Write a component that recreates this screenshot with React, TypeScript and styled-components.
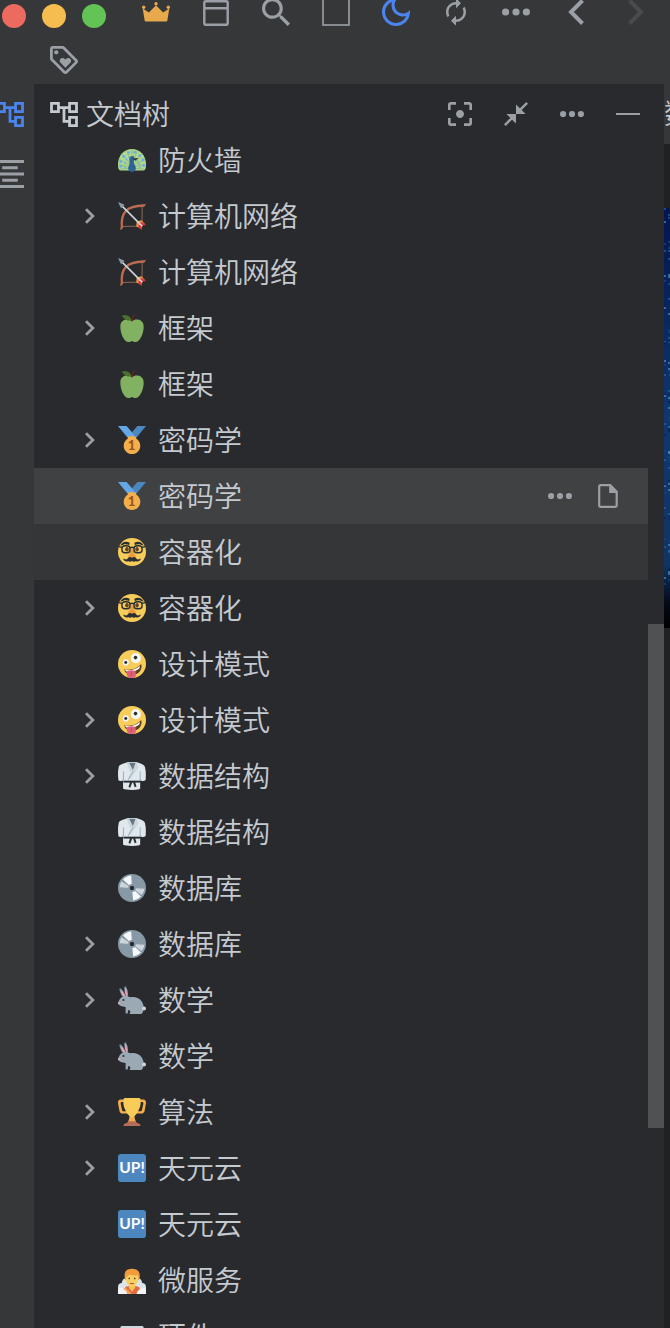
import React from "react";
import styled, { createGlobalStyle } from "styled-components";

const color = {
  bar: "#363738",
  panel: "#292a2d",
  editor: "#202122",
  text: "#c5cad1",
  icon: "#9aa0a6",
  faint: "#4a4b4c",
  accent: "#4c84ef",
  focusRow: "#353637",
  hoverRow: "#404142",
  thumb: "#505153",
};

const GlobalStyle = createGlobalStyle`
  * { box-sizing: border-box; }
  body {
    margin: 0;
    background: ${color.bar};
    color: ${color.text};
    font-family: "Noto Sans CJK SC", "Noto Sans", sans-serif;
    font-size: 28px;
    font-weight: 350;
  }
`;

const Shell = styled.div`
  display: flex;
  flex-direction: column;
  height: 100vh;
  overflow: hidden;
`;

const TitleBar = styled.header`
  display: flex;
  align-items: flex-end;
  height: 36px;
  flex: none;
`;

const WindowControls = styled.div`
  display: flex;
  gap: 16px;
  padding: 0 20px 8px 2px;
`;

const Light = styled.button<{ $fill: string }>`
  width: 24px;
  height: 24px;
  padding: 0;
  border: 0;
  border-radius: 50%;
  background: ${(p) => p.$fill};
`;

const IconButton = styled.button<{ $w: number; $h: number; $tone?: string }>`
  display: flex;
  align-items: center;
  justify-content: center;
  flex: none;
  width: ${(p) => p.$w}px;
  height: ${(p) => p.$h}px;
  padding: 0;
  border: 0;
  background: none;
  color: ${(p) => p.$tone ?? color.icon};
`;

const Glyph = styled.svg`
  display: block;
  flex: none;
  fill: currentColor;
`;

const PluginBar = styled.div`
  display: flex;
  flex: none;
  height: 48px;
  padding-left: 34px;
`;

const Workspace = styled.div`
  display: flex;
  flex: 1;
  min-height: 0;
`;

const Dock = styled.nav`
  display: flex;
  flex-direction: column;
  flex: none;
  width: 34px;
  overflow: hidden;
`;

const DockButton = styled(IconButton)`
  justify-content: flex-end;
  padding-right: 10px;
`;

const Panel = styled.section`
  display: flex;
  flex-direction: column;
  flex: 1;
  min-width: 0;
  background: ${color.panel};
`;

const PanelHeader = styled.div`
  display: flex;
  align-items: center;
  flex: none;
  height: 60px;
  padding: 0 8px 0 16px;
`;

const PanelTitle = styled.h1`
  flex: 1;
  margin: 0 0 0 8px;
  padding-bottom: 2px;
  font-size: 28px;
  font-weight: 350;
  line-height: 40px;
`;

const Scroller = styled.div`
  display: flex;
  flex: 1;
  min-height: 0;
`;

const Tree = styled.ul`
  flex: 1;
  min-width: 0;
  margin: -12px 0 0;
  padding: 0;
  overflow: hidden;
  list-style: none;
`;

const Row = styled.li<{ $state?: "hover" | "focus" }>`
  display: flex;
  align-items: center;
  height: 56px;
  padding: 0 16px 0 42px;
  background: ${(p) =>
    p.$state === "hover" ? color.hoverRow : p.$state === "focus" ? color.focusRow : "transparent"};
`;

const ToggleSlot = styled.div`
  display: flex;
  width: 28px;
  margin-right: 14px;
`;

const DocLink = styled.a`
  display: flex;
  align-items: center;
  flex: 1;
  gap: 12px;
  color: inherit;
  text-decoration: none;
  white-space: nowrap;
`;

const DocName = styled.span`
  padding-bottom: 2px;
  line-height: 40px;
`;

const Track = styled.div`
  flex: none;
  width: 16px;
`;

const Thumb = styled.div`
  height: 504px;
  margin-top: 480px;
  background: ${color.thumb};
`;

const Editor = styled.main`
  display: flex;
  flex-direction: column;
  flex: none;
  width: 6px;
  overflow: hidden;
  background: ${color.editor};
`;

const EditorTab = styled.div`
  flex: none;
  height: 60px;
  background: ${color.bar};
  line-height: 56px;
  white-space: nowrap;
`;

const Cover = styled.svg`
  display: block;
  flex: none;
  width: 100%;
  height: 420px;
  margin-top: 64px;
`;

/* ---------- interface icons ---------- */

type IconProps = { box: string; w: number; h: number; d?: string; children?: React.ReactNode };
const Icon = ({ box, w, h, d, children }: IconProps) => (
  <Glyph viewBox={box} width={w} height={h} aria-hidden="true">
    {d && <path d={d} />}
    {children}
  </Glyph>
);

const TreeIcon = () => (
  <Icon
    box="2 3 20 18"
    w={28}
    h={25}
    d="M22 11V3h-7v3H9V3H2v8h7V8h2v10h4v3h7v-8h-7v3h-2V8h2v3h7zM7 9H4V5h3v4zm10 6h3v4h-3v-4zm0-10h3v4h-3V5z"
  />
);
const OutlineIcon = () => (
  <Icon
    box="3 3 18 18"
    w={28}
    h={28}
    d="M7 15v2h10v-2H7zm-4 6h18v-2H3v2zm0-8h18v-2H3v2zm4-6v2h10V7H7zM3 3v2h18V3H3z"
  />
);
const Dots = ({ size }: { size: number }) => (
  <Icon box="0 0 28 8" w={size} h={8}>
    <circle cx="3.6" cy="4" r="3.6" />
    <circle cx="14" cy="4" r="3.6" />
    <circle cx="24.4" cy="4" r="3.6" />
  </Icon>
);
const Crown = () => (
  <Icon box="0 0 28 20" w={28} h={20}>
    <path d="M3.5 19.5h21c.5 0 .8-.3.8-.7l2-12.300-6.200 4L14 3.200l-7.100 7.300L.7 6.500l2 12.300c.1.4.4.7.8.7z" />
    <circle cx="1.700" cy="5.200" r="1.700" />
    <circle cx="14" cy="1.700" r="1.700" />
    <circle cx="26.300" cy="5.200" r="1.700" />
  </Icon>
);
const Calendar = () => (
  <Icon box="0 0 28 28" w={28} h={28}>
    <rect x="2.300" y="3.200" width="23.400" height="23.500" rx="1.500" fill="none" stroke="currentColor" strokeWidth="2.400" />
    <path d="M2 9h24v2.400H2zM6 0h3v4H6zM19 0h3v4h-3z" />
  </Icon>
);
const Search = () => (
  <Icon
    box="3 3 17.500 17.500"
    w={28}
    h={28}
    d="M15.500 14h-.79l-.28-.27C15.410 12.590 16 11.110 16 9.500 16 5.910 13.090 3 9.500 3S3 5.910 3 9.500 5.910 16 9.500 16c1.610 0 3.090-.59 4.230-1.570l.27.28v.79l5 4.990L20.490 19l-4.990-5zm-6 0C7.010 14 5 11.990 5 9.500S7.010 5 9.500 5 14 7.010 14 9.500 11.990 14 9.500 14z"
  />
);
const Square = () => (
  <Icon box="0 0 28 28" w={28} h={28}>
    <rect x="1" y="1" width="26" height="26" fill="none" stroke="currentColor" strokeWidth="1.600" />
  </Icon>
);
const Moon = () => (
  <Icon
    box="3 3 18 18"
    w={28}
    h={28}
    d="M9.370 5.510C9.190 6.150 9.100 6.820 9.100 7.500c0 4.080 3.320 7.400 7.400 7.400.68 0 1.350-.09 1.990-.27C17.450 17.190 14.930 19 12 19c-3.860 0-7-3.140-7-7 0-2.930 1.810-5.450 4.370-6.490zM12 3c-4.970 0-9 4.030-9 9s4.030 9 9 9 9-4.030 9-9c0-.46-.04-.92-.1-1.360-.98 1.370-2.580 2.260-4.400 2.260-2.980 0-5.400-2.420-5.400-5.400 0-1.810.89-3.420 2.260-4.400C12.920 3.040 12.460 3 12 3z"
  />
);
const Refresh = () => (
  <Icon
    box="0 0 24 24"
    w={30}
    h={30}
    d="M12 6v3l4-4-4-4v3c-4.420 0-8 3.580-8 8 0 1.570.46 3.030 1.240 4.260L6.700 14.800c-.45-.83-.7-1.790-.7-2.800 0-3.310 2.690-6 6-6zm6.760 1.740L17.300 9.200c.44.84.7 1.790.7 2.800 0 3.310-2.690 6-6 6v-3l-4 4 4 4v-3c4.420 0 8-3.580 8-8 0-1.570-.46-3.030-1.240-4.260z"
  />
);
const Arrow = ({ flip }: { flip?: boolean }) => (
  <Icon box="0 0 16 26" w={16} h={26}>
    <path
      d={flip ? "M1.500 1.500L13 13 1.500 24.500" : "M14.500 1.500L3 13l11.500 11.500"}
      fill="none"
      stroke="currentColor"
      strokeWidth="4"
    />
  </Icon>
);
const TagHeart = () => (
  <Icon box="2 2 20 20" w={28} h={28}>
    <path d="M21.410 11.580l-9-9C12.050 2.220 11.550 2 11 2H4c-1.100 0-2 .9-2 2v7c0 .55.22 1.050.59 1.420l9 9c.36.36.86.58 1.410.58s1.050-.22 1.410-.59l7-7c.37-.36.59-.86.59-1.410s-.23-1.060-.59-1.420zM13 20.010L4 11V4h7v-.01l9 9-7 7.020z" />
    <circle cx="6.500" cy="6.500" r="1.500" />
    <path d="M8.900 12.550c0 .57.23 1.070.6 1.450l3.500 3.500 3.500-3.500c.37-.37.6-.89.6-1.450 0-1.130-.92-2.050-2.050-2.050-.57 0-1.080.23-1.450.6l-.6.600-.6-.590c-.37-.38-.89-.61-1.450-.61-1.130 0-2.050.92-2.050 2.050z" />
  </Icon>
);
const Focus = () => (
  <Icon
    box="3 3 18 18"
    w={24}
    h={24}
    d="M12 9c-1.660 0-3 1.340-3 3s1.340 3 3 3 3-1.340 3-3-1.340-3-3-3zm-7 6H3v4c0 1.100.9 2 2 2h4v-2H5v-4zM5 5h4V3H5c-1.100 0-2 .9-2 2v4h2V5zm14-2h-4v2h4v4h2V5c0-1.100-.9-2-2-2zm0 16h-4v2h4c1.100 0 2-.9 2-2v-4h-2v4z"
  />
);
const Collapse = () => (
  <Icon
    box="2 2 20 20"
    w={24}
    h={24}
    d="M22 3.410L16.710 8.700 20 12h-8V4l3.290 3.290L20.590 2 22 3.410zM3.410 22l5.290-5.290L12 20v-8H4l3.290 3.290L2 20.590 3.410 22z"
  />
);
const Minus = () => <Icon box="0 0 24 2" w={24} h={2} d="M0 0h24v2H0z" />;
const FileIcon = () => (
  <Icon box="0 0 20 24" w={20} h={24}>
    <path d="M2.500 1.200h9.800L18.700 7.600v13.900c0 .8-.5 1.300-1.300 1.300H2.500c-.8 0-1.300-.5-1.300-1.300v-19c0-.8.5-1.300 1.300-1.300z" fill="none" stroke="currentColor" strokeWidth="2.200" />
    <path d="M11.200 1l8 8h-8z" />
  </Icon>
);
const Chevron = () => (
  <Icon box="0 0 12 16" w={12} h={16}>
    <path d="M2 1.200L8.900 8 2 14.800" fill="none" stroke="currentColor" strokeWidth="2.700" />
  </Icon>
);

/* ---------- document emoji ---------- */

const outerSpots = [
  [3.500, 26], [3.500, 20], [7.500, 13.500], [14, 8.500], [21.500, 8], [28, 12.500], [32, 18], [33, 25],
];
const innerSpots = [
  [9, 27.500], [9, 22], [11, 17.500], [14.500, 14], [25, 19.500], [27, 23], [28, 27.500],
];

const emoji = {
  peacock: (
    <>
      <path d="M18 4C8 4 0 12.500 0 23.500c0 6 1 8 4 8h28c3 0 4-2 4-8C36 12.500 28 4 18 4z" fill="#b2d88f" />
      <path d="M18 26L1 17M18 26L5 10M18 26L11 5M18 26L18 4M18 26L25 5M18 26L31 10M18 26L35 17M18 27L1 24M18 27L35 24M18 28L2 30M18 28L34 30" stroke="#84b368" strokeWidth="0.900" fill="none" />
      {outerSpots.map(([x, y]) => (
        <circle key={`${x}-${y}`} cx={x} cy={y} r="1.900" fill="#67b1e8" />
      ))}
      {innerSpots.map(([x, y]) => (
        <circle key={`${x}-${y}`} cx={x} cy={y} r="1.300" fill="#67b1e8" />
      ))}
      <path d="M20.500 13.500c-2.500-1.500-6 0-6 4 0 3 1 4.500 0 7-1.500 2.500-2 5-.5 7 1.800 2.300 6.200 2.300 8 0 1.500-2 1-4.800-.5-7-1-1.600-2-3.500-.5-7z" fill="#2c6399" />
      <path d="M19 16l7-.5-3.500 3.500z" fill="#292f33" />
    </>
  ),
  bow: (
    <>
      <path d="M5 31.500L31 31 31 5" fill="none" stroke="#8c6a5a" strokeWidth="1.300" />
      <path d="M5 33C3.500 14 10 5 33 4.500" fill="none" stroke="#bd6c50" strokeWidth="3" strokeLinecap="round" />
      <path d="M3.200 35.500l2-4M31.500 5l4-2" fill="none" stroke="#bd6c50" strokeWidth="1.800" />
      <path d="M24 25l6-1.500 5 5-3.500 1-1 5-7-3z" fill="#f49c38" />
      <path d="M25 27l6-1 5 3.500-5 .7zM26 29l4 1 1 6-4.500-2.500z" fill="#dd3342" />
      <path d="M4 4l27 27" stroke="#ccd6dd" strokeWidth="2.100" />
      <path d="M0 0l8.500 3.500L6 6 4 8.500z" fill="#8899a6" />
    </>
  ),
  apple: (
    <>
      <path d="M24 7c-3 0-3 1-6 1s-3-1-6-1c-4 0-9 2-9 9 0 11 6 20 10 20 3 0 3-1 5-1s2 1 5 1c4 0 10-9 10-20 0-7-5-9-9-9z" fill="#83b162" />
      <path d="M17.500 8.500C15 9 8 8.500 5 2c6-1.500 11 0 12.500 6.500z" fill="#47712d" />
      <path d="M18.300 9.500c-.8 0-1.300-.6-1.200-1.300C17.500 4.500 19 1.500 21 .4c.8-.4 1.700.6 1 1.300-1.500 1.700-2.300 4-2.500 6.700 0 .6-.5 1.100-1.200 1.100z" fill="#63261a" />
    </>
  ),
  medal: (
    <>
      <path d="M18 8l-7-8H0l14 17 11.521-4.750z" fill="#65a8e8" />
      <path d="M25 0l-7 8 5.390 7.312 1.227-1.489L36 0z" fill="#4c87bf" />
      <path d="M23.205 16.026c.08-.217.131-.448.131-.693 0-1.104-.896-2-2-2h-6.667c-1.104 0-2 .896-2 2 0 .245.05.476.131.693-3.258 1.826-5.464 5.307-5.464 9.307C7.336 31.224 12.111 36 18.002 36c5.892 0 10.667-4.776 10.667-10.667 0-4-2.206-7.481-5.464-9.307z" fill="#f4ae4b" />
      <text x="17.500" y="31" textAnchor="middle" fill="#95561f" fontFamily="Lato, sans-serif" fontWeight="900" fontSize="17">1</text>
    </>
  ),
  disguise: (
    <>
      <circle cx="18" cy="18" r="18" fill="#f8cc59" />
      <ellipse cx="11.500" cy="14.500" rx="2.300" ry="3" fill="#63462a" />
      <ellipse cx="24.500" cy="14.500" rx="2.300" ry="3" fill="#63462a" />
      <path d="M18 14c-2 0-2.500 6-4.500 8.500C12 25 14.500 26.500 18 26s6-1 4.500-3.500C20.500 20 20 14 18 14z" fill="#ee9b43" />
      <g fill="none" stroke="#292f33" strokeWidth="1.800">
        <rect x="5" y="10" width="10.500" height="9" rx="4" />
        <rect x="20.500" y="10" width="10.500" height="9" rx="4" />
        <path d="M15.500 13c1.500-1.200 3.500-1.200 5 0M5 12l-4-1M31 12l4-1" />
      </g>
      <path d="M3 10c2-5 7-6.500 12-4l-.5 3C10 7 7 8 3 10zM33 10c-2-5-7-6.500-12-4l.5 3C26 7 29 8 33 10z" fill="#292f33" />
      <path d="M18 25.500c-2.500-2-5-.5-6 1.500-1.500 1-3.500.5-5.500-.5 1 4 4.500 4 6.500 3.500 2 1 4 .7 5-.3 1 1 3 1.300 5 .3 2 .5 5.500.5 6.500-3.500-2 1-4 1.500-5.500.5-1-2-3.500-3.500-6-1.500z" fill="#292f33" />
    </>
  ),
  zany: (
    <>
      <circle cx="18" cy="18" r="18" fill="#f8cc59" />
      <circle cx="23" cy="10.500" r="6.500" fill="#f4f6f7" />
      <circle cx="10" cy="16" r="4" fill="#f4f6f7" />
      <circle cx="22.500" cy="9.800" r="2.300" fill="#292f33" />
      <circle cx="10" cy="16" r="1.900" fill="#292f33" />
      <path d="M8 25c8 1.500 16-.5 22-7 1.500 7-3 13-9.500 13.500C14 32 9 30 8 25z" fill="#5d3e20" />
      <path d="M9 25.500c7.500 1.300 14.500-.7 19-5 .3 1.500-.3 2.500-1 3.500-5 4-10.500 4.500-15.500 4-1.200-.5-2-1.200-2.500-2.500z" fill="#fff" />
      <path d="M11 28c4-2.500 8-2.500 11.500-1l.5 5c0 2-2 4-5.500 4s-6-1.500-6-4z" fill="#de6179" />
      <path d="M17 28l.5 5" stroke="#b74256" strokeWidth="1" />
    </>
  ),
  robe: (
    <>
      <path d="M13 0C8 2 2 3 1 6c-1.500 6-1 12-.5 17 1 1.500 4 1.700 6 .8V34c3 2.500 20 2.500 22 0V23.800c2 .9 5.500.7 7-.8.5-6 .5-12-1-17-1-3-6-4-11-6z" fill="#e1e8ed" />
      <path d="M12 1h12L19 12z" fill="#66757f" />
      <path d="M11 1l3-.7 5 9.700-3 4zM24.500 1l-2-.5-3 9-7 12 2 1L26 8z" fill="#ccd6dd" />
      <path d="M7 12v12M28.500 12v12M19.500 12l-6.500 11" stroke="#99aab5" strokeWidth="1.200" fill="none" />
      <path d="M7 24h22v2.500H7z" fill="#292f33" />
      <path d="M16 24l-2.500 8 2.300 1 3-8zM19 25l2.500 7.500 2.300-1L21.500 24z" fill="#292f33" />
    </>
  ),
  disc: (
    <>
      <circle cx="18" cy="18" r="18" fill="#8899a6" />
      <path d="M18 18L4.500 9.500A16 16 0 0 0 2 17z" fill="#ccd6dd" />
      <path d="M18 18L17 2A16 16 0 0 0 6.500 7z" fill="#f5f8fa" />
      <path d="M18 18l1.500 16A16 16 0 0 0 29.500 29z" fill="#f5f8fa" />
      <path d="M18 18l12.500 9A16 16 0 0 0 34 19z" fill="#ccd6dd" />
      <circle cx="18" cy="18" r="5" fill="#8899a6" />
      <circle cx="18" cy="18" r="2.800" fill="#292a2d" />
    </>
  ),
  rabbit: (
    <>
      <path d="M6 14C3 9 1 4.500 2.500 2.500c3 2 6.500 6.500 7.500 11.500zM11 15C9 10 7 2 9 0c3 2 5 10 3.500 15z" fill="#8799a7" />
      <path d="M3.500 5C3.500 8 6 12 8 14l1.500-.5C8.500 10 6 6.500 3.500 5zM9.500 2c-.8 4 0 9 1.300 12 1.500-3 .9-9-1.300-12z" fill="#e5a4b3" />
      <path d="M1 20c1-4 5-7 9-7 3 0 4 1.500 6 1.500 8-2 16 3 17 12 0 5-1 9.500-3.500 9.500H15l1-4-3-1-.5 4.500H9.800V27C5 26.500 0 26 1 20z" fill="#9ba9b5" />
      <circle cx="33.500" cy="29" r="2.500" fill="#ccd6dd" />
      <circle cx="7" cy="18" r="1.300" fill="#292f33" />
      <path d="M0 21c1-1.500 2.500-1 3 .5-.5 2-2 2.500-3 2z" fill="#e5a4b3" />
    </>
  ),
  trophy: (
    <>
      <path d="M5.123 5h6C12.227 5 13 4.896 13 6V4c0-1.104-.773-2-1.877-2h-8c-2 0-3.583 2.125-3 5 0 0 1.791 9.375 1.917 9.958C2.373 18.500 4.164 20 6.081 20h6.958c1.105 0-.039-1.896-.039-3v-2c0 1.104-.773 2-1.877 2h-4c-1.104 0-1.833-1.042-2-2S3.539 7.667 3.539 7.667C3.206 5.750 4.018 5 5.123 5zm25.812 0h-6C23.831 5 22 4.896 22 6V4c0-1.104 1.831-2 2.935-2h8c2 0 3.584 2.125 3 5 0 0-1.633 9.419-1.771 10-.354 1.500-2.042 3-4 3h-7.146C21.914 20 22 18.104 22 17v-2c0 1.104 1.831 2 2.935 2h4c1.104 0 1.834-1.042 2-2s1.584-7.333 1.584-7.333C32.851 5.750 32.040 5 30.935 5z" fill="#f4ae4b" />
      <path d="M15 20h6c0 6 1 9 3 12H12c2-3 3-6 3-12z" fill="#f4ae4b" />
      <path d="M29.123 6.577C29.123 13.352 22.353 25 18.008 25 13.663 25 6.893 13.352 6.893 6.577 6.893 1.500 7 0 9.500 0h17c2.600 0 2.623 1.500 2.623 6.577z" fill="#f8cc59" />
      <path d="M7 36c0-2.500 2-4 5-4l1.500-2h9l1.500 2c3 0 5 1.500 5 4z" fill="#b66f56" />
    </>
  ),
  up: (
    <>
      <rect width="36" height="36" rx="4" fill="#4c87bf" />
      <text x="18" y="25" textAnchor="middle" fill="#fff" fontFamily="Lato, sans-serif" fontWeight="700" fontSize="20">UP!</text>
    </>
  ),
  sauna: (
    <>
      <path d="M0 36V27c0-3 2-5 5-5 0-4 3-7 7-7h12c4 0 7 3 7 7 3 0 5 2 5 5v9z" fill="#dce3e8" />
      <path d="M5 36c0-6 4-9 9-10h8c5 1 9 4 9 10z" fill="#f4a25a" />
      <path d="M9 27l9 9h5l5-8c-2-1.500-4-2-6-2h-8c-2 0-3.500.4-5 1z" fill="#e06b43" />
      <path d="M14 23h8v5l-4 5-4-5z" fill="#f5c451" />
      <path d="M8.500 12C8.500 6 12 3.500 18 3.500S28 6 28 13c0 2-.5 4-1 5H9.500c-.6-1-1-3-1-6z" fill="#f19b3d" />
      <path d="M10 15c2-1 3.500-2 4.500-4 3 1.500 8 1.500 10.500.5.7 1 1 2 1 4 0 6-3.500 11-8 11s-8-5-8-11.500z" fill="#f8cf61" />
      <circle cx="14.500" cy="16" r="1.100" fill="#63462a" />
      <circle cx="21.500" cy="16" r="1.100" fill="#63462a" />
      <path d="M15 22h6c-1 2-5 2-6 0z" fill="#b54a36" />
      <path d="M0 36v-6c2-3 7-2 8 1 2 0 3.500 2 3.500 5zM36 36v-6c-2-3-7-2-8 1-2 0-3.500 2-3.500 5z" fill="#f1f4f6" />
    </>
  ),
  computer: (
    <>
      <rect x="3" y="5" width="30" height="24" rx="2" fill="#ccd6dd" />
      <rect x="6" y="8" width="24" height="16" fill="#5b9bd5" />
      <path d="M12 29h12v4H12z" fill="#99aab5" />
    </>
  ),
};

type Doc = { icon: keyof typeof emoji; name: string; open?: boolean; state?: "hover" | "focus" };

const docs: Doc[] = [
  { icon: "peacock", name: "防火墙" },
  { icon: "bow", name: "计算机网络", open: true },
  { icon: "bow", name: "计算机网络" },
  { icon: "apple", name: "框架", open: true },
  { icon: "apple", name: "框架" },
  { icon: "medal", name: "密码学", open: true },
  { icon: "medal", name: "密码学", state: "hover" },
  { icon: "disguise", name: "容器化", state: "focus" },
  { icon: "disguise", name: "容器化", open: true },
  { icon: "zany", name: "设计模式" },
  { icon: "zany", name: "设计模式", open: true },
  { icon: "robe", name: "数据结构", open: true },
  { icon: "robe", name: "数据结构" },
  { icon: "disc", name: "数据库" },
  { icon: "disc", name: "数据库", open: true },
  { icon: "rabbit", name: "数学", open: true },
  { icon: "rabbit", name: "数学" },
  { icon: "trophy", name: "算法", open: true },
  { icon: "up", name: "天元云", open: true },
  { icon: "up", name: "天元云" },
  { icon: "sauna", name: "微服务" },
  { icon: "computer", name: "硬件" },
];

const tools: { label: string; icon: React.ReactNode; tone?: string }[] = [
  { label: "会员", icon: <Crown />, tone: "#e8a84c" },
  { label: "日历", icon: <Calendar /> },
  { label: "搜索", icon: <Search /> },
  { label: "窗口", icon: <Square /> },
  { label: "深色模式", icon: <Moon />, tone: color.accent },
  { label: "同步", icon: <Refresh /> },
  { label: "更多", icon: <Dots size={28} /> },
  { label: "后退", icon: <Arrow /> },
  { label: "前进", icon: <Arrow flip />, tone: color.faint },
];

const panelTools = [
  { label: "定位", icon: <Focus /> },
  { label: "折叠", icon: <Collapse /> },
  { label: "更多", icon: <Dots size={24} /> },
  { label: "最小化", icon: <Minus /> },
];

const DocRow = ({ doc }: { doc: Doc }) => (
  <Row $state={doc.state}>
    <ToggleSlot>
      {doc.open && (
        <IconButton $w={28} $h={40} aria-label="展开">
          <Chevron />
        </IconButton>
      )}
    </ToggleSlot>
    <DocLink href="#">
      <Glyph viewBox="0 0 36 36" width={28} height={28} aria-hidden="true">
        {emoji[doc.icon]}
      </Glyph>
      <DocName>{doc.name}</DocName>
    </DocLink>
    {doc.state === "hover" && (
      <>
        <IconButton $w={48} $h={48} aria-label="更多">
          <Dots size={24} />
        </IconButton>
        <IconButton $w={48} $h={48} aria-label="新建文档">
          <FileIcon />
        </IconButton>
      </>
    )}
  </Row>
);

const stars = Array.from({ length: 90 }, (_, i) => ({
  x: (i * i * 7 + i * 3) % 6,
  y: (i * 89 + ((i * i) % 11)) % 385,
  tone: ["#2f68a8", "#0a1c4e", "#5f94cc", "#174886"][(i * 7 + (i % 3)) % 4],
}));

export default function App() {
  return (
    <>
      <GlobalStyle />
      <Shell>
        <TitleBar>
          <WindowControls>
            <Light $fill="#ed6a5e" aria-label="关闭" />
            <Light $fill="#f5bd4f" aria-label="最小化" />
            <Light $fill="#61c454" aria-label="全屏" />
          </WindowControls>
          {tools.map((t) => (
            <IconButton key={t.label} $w={60} $h={48} $tone={t.tone} aria-label={t.label}>
              {t.icon}
            </IconButton>
          ))}
        </TitleBar>
        <PluginBar>
          <IconButton $w={60} $h={48} aria-label="收藏">
            <TagHeart />
          </IconButton>
        </PluginBar>
        <Workspace>
          <Dock>
            <DockButton $w={34} $h={60} $tone={color.accent} aria-label="文档树">
              <TreeIcon />
            </DockButton>
            <DockButton $w={34} $h={60} aria-label="大纲">
              <OutlineIcon />
            </DockButton>
          </Dock>
          <Panel>
            <PanelHeader>
              <TreeIcon />
              <PanelTitle>文档树</PanelTitle>
              {panelTools.map((t) => (
                <IconButton key={t.label} $w={56} $h={56} aria-label={t.label}>
                  {t.icon}
                </IconButton>
              ))}
            </PanelHeader>
            <Scroller>
              <Tree>
                {docs.map((doc, i) => (
                  <DocRow key={i} doc={doc} />
                ))}
              </Tree>
              <Track>
                <Thumb />
              </Track>
            </Scroller>
          </Panel>
          <Editor>
            <EditorTab>数</EditorTab>
            <Cover viewBox="0 0 6 420" preserveAspectRatio="none" aria-hidden="true">
              <defs>
                <linearGradient id="night" x1="0" y1="0" x2="0" y2="1">
                  <stop offset="0" stopColor="#06144c" />
                  <stop offset="0.5" stopColor="#0f376e" />
                  <stop offset="0.85" stopColor="#123462" />
                  <stop offset="0.94" stopColor="#050a18" />
                  <stop offset="1" stopColor="#000" />
                </linearGradient>
              </defs>
              <rect width="6" height="420" fill="url(#night)" />
              {stars.map((s, i) => (
                <rect key={i} x={s.x} y={s.y} width="2" height="2" fill={s.tone} opacity="0.6" />
              ))}
            </Cover>
          </Editor>
        </Workspace>
      </Shell>
    </>
  );
}
